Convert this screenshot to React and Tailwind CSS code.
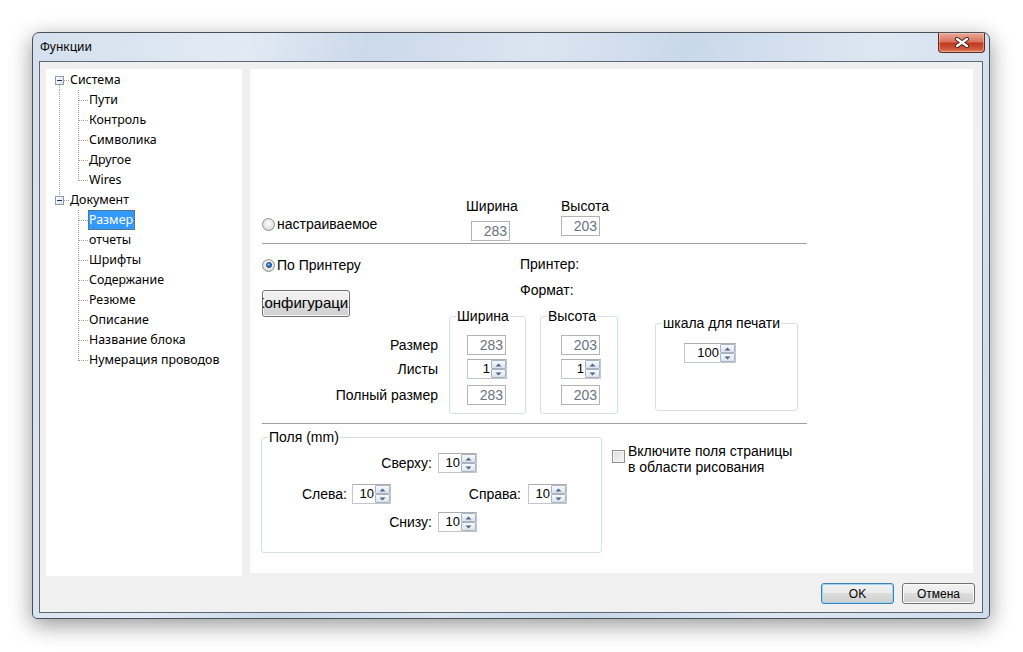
import React from "react";

const TREE = [
  { t: "Система", kind: "root1" },
  { t: "Пути", kind: "c1" },
  { t: "Контроль", kind: "c1" },
  { t: "Символика", kind: "c1" },
  { t: "Другое", kind: "c1" },
  { t: "Wires", kind: "c1last" },
  { t: "Документ", kind: "root2" },
  { t: "Размер", kind: "c2", sel: true },
  { t: "отчеты", kind: "c2" },
  { t: "Шрифты", kind: "c2" },
  { t: "Содержание", kind: "c2" },
  { t: "Резюме", kind: "c2" },
  { t: "Описание", kind: "c2" },
  { t: "Название блока", kind: "c2" },
  { t: "Нумерация проводов", kind: "c2last" },
];

const DOT = { stroke: "#a0a0a0", strokeWidth: 1, strokeDasharray: "1 1", shapeRendering: "crispEdges" };

function Cell1({ kind }) {
  return (
    <svg width="20" height="20" className="shrink-0">
      {(kind === "root1" || kind === "root2") && (
        <>
          {kind === "root1" && <line x1="10.5" y1="15" x2="10.5" y2="20" style={DOT} />}
          {kind === "root2" && <line x1="10.5" y1="0" x2="10.5" y2="6" style={DOT} />}
          <line x1="15" y1="10.5" x2="20" y2="10.5" style={DOT} />
          <defs>
            <linearGradient id={"bx" + kind} x1="0" y1="0" x2="1" y2="1">
              <stop offset="0" stopColor="#ffffff" />
              <stop offset="1" stopColor="#d9dde6" />
            </linearGradient>
          </defs>
          <rect x="6.5" y="6.5" width="8" height="8" fill={"url(#bx" + kind + ")"} stroke="#8f9aa8" shapeRendering="crispEdges" />
          <line x1="8" y1="10.5" x2="13" y2="10.5" stroke="#1f2f52" shapeRendering="crispEdges" />
        </>
      )}
      {(kind === "c1" || kind === "c1last") && <line x1="10.5" y1="0" x2="10.5" y2="20" style={DOT} />}
    </svg>
  );
}

function Cell2({ kind }) {
  const last = kind === "c1last" || kind === "c2last";
  return (
    <svg width="19" height="20" className="shrink-0">
      <line x1="9.5" y1="0" x2="9.5" y2={last ? 11 : 20} style={DOT} />
      <line x1="10" y1="10.5" x2="19" y2="10.5" style={DOT} />
    </svg>
  );
}

function Tree() {
  return (
    <div className="w-[196px] h-[507px] bg-white pl-[3px] pt-[1px] font-['Noto_Sans',sans-serif] text-[12.4px] text-black">
      {TREE.map((n, i) => {
        const isRoot = n.kind === "root1" || n.kind === "root2";
        return (
          <div key={i} className="flex h-[20px] items-center">
            <Cell1 kind={n.kind} />
            {!isRoot && <Cell2 kind={n.kind} />}
            <span
              className={
                n.sel
                  ? "h-[20px] leading-[18px] border border-dotted border-[#6b5a2e] bg-[#3399ff] text-white pr-[1px] whitespace-nowrap"
                  : "h-[20px] leading-[18px] border border-transparent pr-[1px] whitespace-nowrap"
              }
            >
              {n.t}
            </span>
          </div>
        );
      })}
    </div>
  );
}

function Radio({ checked }) {
  return (
    <span className="relative w-[13px] h-[13px] rounded-full border border-[#8e8f8f] bg-[radial-gradient(circle_at_50%_40%,#ffffff,#e4e4e4_55%,#c8c8c8)] flex items-center justify-center shrink-0">
      {checked && (
        <span className="w-[6px] h-[6px] rounded-full bg-[radial-gradient(circle_at_40%_35%,#8fd0ff,#1c6fc4_60%,#0e3f80)] border border-[#1a3f70]" />
      )}
    </span>
  );
}

function TBox({ v, w = "w-[39px]" }) {
  return (
    <div className={"h-[20px] border border-[#b4b4b4] bg-white text-right pr-[2px] text-[14px] leading-[18px] text-[#6b7280] " + w}>
      {v}
    </div>
  );
}

function Tri({ down }) {
  return (
    <svg width="7" height="4" viewBox="0 0 7 4">
      {down ? <polygon points="0.5,0.5 6.5,0.5 3.5,3.5" fill="#4f6384" /> : <polygon points="0.5,3.5 6.5,3.5 3.5,0.5" fill="#4f6384" />}
    </svg>
  );
}

function Spin({ v, w = "w-[39px]" }) {
  return (
    <div className={"flex h-[20px] border border-[#c2c7cf] border-t-[#abadb3] bg-white " + w}>
      <div className="flex-1 text-right pr-[1px] text-[13px] leading-[18px] text-black">{v}</div>
      <div className="w-[15px] flex flex-col">
        <div className="h-[9px] border border-[#a9b2be] rounded-[1px] bg-gradient-to-b from-[#f7f9fc] to-[#dbe2ec] flex items-center justify-center">
          <Tri />
        </div>
        <div className="h-[9px] border border-[#a9b2be] rounded-[1px] bg-gradient-to-b from-[#f7f9fc] to-[#dbe2ec] flex items-center justify-center">
          <Tri down />
        </div>
      </div>
    </div>
  );
}

function Group({ title, className, children }) {
  return (
    <div className={"relative border border-[#d5dfe5] rounded-[3px] " + className}>
      <span className="absolute left-[6px] top-[-9px] bg-white px-[1px] leading-[16px] whitespace-nowrap">{title}</span>
      {children}
    </div>
  );
}

function WinButton({ children, focused, className = "" }) {
  return (
    <div
      className={
        "h-[21px] w-[73px] rounded-[3px] border flex items-center justify-center text-[12px] text-black bg-[linear-gradient(to_bottom,#f2f2f2_0%,#ebebeb_45%,#dddddd_50%,#cfcfcf_100%)] " +
        (focused ? "border-[#3c7fb1] shadow-[inset_0_0_0_1px_#9fd6f5]" : "border-[#707070] shadow-[inset_0_0_0_1px_#fbfbfb]") +
        " " +
        className
      }
    >
      {children}
    </div>
  );
}

function RightPanel() {
  return (
    <div className="w-[723px] h-[504px] bg-white pl-[12px] pt-[129px] font-['Liberation_Sans',Arial,sans-serif] text-[14px] text-black">
      {/* Block 1 */}
      <div className="flex h-[43px]">
        <div className="w-[204px]">
          <div className="mt-[18px] h-[16px] flex items-center">
            <Radio />
            <span className="ml-[2px] leading-[16px]">настраиваемое</span>
          </div>
        </div>
        <div className="w-[95px] flex flex-col">
          <div className="leading-[16px]">Ширина</div>
          <div className="mt-[7px] ml-[5px]">
            <TBox v="283" />
          </div>
        </div>
        <div className="flex flex-col">
          <div className="leading-[16px]">Высота</div>
          <div className="mt-[2px]">
            <TBox v="203" />
          </div>
        </div>
      </div>
      <div className="mt-[2px] h-px w-[545px] bg-[#a0a0a0]" />

      {/* Block 2/3 */}
      <div className="flex h-[170px]">
        <div className="w-[176px] flex flex-col">
          <div className="mt-[13px] h-[16px] flex items-center">
            <Radio checked />
            <span className="ml-[2px] leading-[16px]">По Принтеру</span>
          </div>
          <div className="mt-[17px] h-[27px] w-[88px] rounded-[3px] border border-[#707070] shadow-[inset_0_0_0_1px_#fbfbfb] bg-[linear-gradient(to_bottom,#f2f2f2_0%,#ebebeb_45%,#dddddd_50%,#cfcfcf_100%)] flex items-center justify-center overflow-hidden">
            <span className="whitespace-nowrap shrink-0 text-[15px]">Конфигурация</span>
          </div>
          <div className="mt-[18px] h-[20px] leading-[20px] text-right">Размер</div>
          <div className="mt-[4px] h-[20px] leading-[20px] text-right">Листы</div>
          <div className="mt-[6px] h-[20px] leading-[20px] text-right">Полный размер</div>
        </div>
        <div className="w-[217px] flex flex-col">
          <div className="mt-[12px] pl-[82px] leading-[16px]">Принтер:</div>
          <div className="mt-[10px] pl-[82px] leading-[16px]">Формат:</div>
          <div className="mt-[18px] ml-[11px] flex">
            <Group title="Ширина" className="w-[77px] h-[98px] pl-[17px] pt-[18px]">
              <TBox v="283" />
              <div className="mt-[4px]">
                <Spin v="1" w="w-[40px]" />
              </div>
              <div className="mt-[6px]">
                <TBox v="283" />
              </div>
            </Group>
            <Group title="Высота" className="ml-[14px] w-[78px] h-[98px] pl-[20px] pt-[18px]">
              <TBox v="203" />
              <div className="mt-[4px]">
                <Spin v="1" w="w-[40px]" />
              </div>
              <div className="mt-[6px]">
                <TBox v="203" />
              </div>
            </Group>
          </div>
        </div>
        <div>
          <Group title="шкала для печати" className="mt-[79px] w-[143px] h-[88px] pl-[28px] pt-[19px]">
            <Spin v="100" w="w-[52px]" />
          </Group>
        </div>
      </div>
      <div className="mt-[9px] h-px w-[545px] bg-[#a0a0a0]" />

      {/* Block 4 */}
      <div className="flex">
        <Group title="Поля (mm)" className="mt-[13px] ml-[-1px] w-[341px] h-[116px] pt-[15px]">
          <div className="flex items-center h-[20px]">
            <div className="w-[170px] text-right leading-[16px]">Сверху:</div>
            <div className="ml-[6px]">
              <Spin v="10" />
            </div>
          </div>
          <div className="mt-[11px] flex items-center h-[20px]">
            <div className="w-[85px] text-right leading-[16px]">Слева:</div>
            <div className="ml-[5px]">
              <Spin v="10" />
            </div>
            <div className="w-[130px] text-right leading-[16px]">Справа:</div>
            <div className="ml-[7px]">
              <Spin v="10" />
            </div>
          </div>
          <div className="mt-[8px] flex items-center h-[20px]">
            <div className="w-[170px] text-right leading-[16px]">Снизу:</div>
            <div className="ml-[6px]">
              <Spin v="10" />
            </div>
          </div>
        </Group>
        <div className="ml-[10px] mt-[19px] flex items-start">
          <span className="mt-[7px] w-[13px] h-[13px] border border-[#8e8f8f] bg-gradient-to-br from-[#dcdcdc] to-[#f8f8f8] shadow-[inset_0_0_0_1px_#f4f4f4] shrink-0" />
          <div className="ml-[3px] leading-[16px]">
            Включите поля страницы
            <br />в области рисования
          </div>
        </div>
      </div>
    </div>
  );
}

export default function App() {
  return (
    <div className="w-[1023px] h-[652px] bg-white overflow-hidden pt-[32px] pl-[32px]">
      <div className="relative w-[958px] h-[587px] rounded-t-[7px] rounded-b-[5px] border border-[#4a5058] bg-[linear-gradient(100deg,#d4e0ee_0%,#e2eaf4_20%,#cbd9ea_32%,#dbe5f1_48%,#c9d8ea_62%,#dde7f2_80%,#cfdcec_100%)] shadow-[0_6px_22px_rgba(0,0,0,0.42)] flex flex-col">
        <div className="h-[28px] flex items-center pl-[7px] font-['Noto_Sans',sans-serif] text-[12px] text-black">
          Функции
        </div>
        <div className="absolute right-[4px] top-0 w-[47px] h-[20px] rounded-b-[4px] border border-t-0 border-[#5f2a22] bg-[linear-gradient(to_bottom,#e9a99a_0%,#d9735f_45%,#c1391f_55%,#cd5a3f_85%,#e08a6a_100%)] shadow-[inset_0_0_0_1px_rgba(255,220,210,0.45)] flex items-center justify-center">
          <svg width="16" height="11" viewBox="0 0 16 11">
            <path d="M3 2 L13 9 M13 2 L3 9" stroke="#47201b" strokeWidth="4" strokeLinecap="round" />
            <path d="M3 2 L13 9 M13 2 L3 9" stroke="#ffffff" strokeWidth="2.2" strokeLinecap="round" />
          </svg>
        </div>
        <div className="mx-[6px] mb-[5px] flex-1 border border-[#5d6874] bg-[#f0f0f0] flex flex-col">
          <div className="flex pt-[7px] pl-[6px] gap-[8px]">
            <Tree />
            <RightPanel />
          </div>
          <div className="mt-[7px] flex justify-end pr-[7px] gap-[8px] font-['Liberation_Sans',Arial,sans-serif]">
            <WinButton focused>OK</WinButton>
            <WinButton>Отмена</WinButton>
          </div>
        </div>
      </div>
    </div>
  );
}
